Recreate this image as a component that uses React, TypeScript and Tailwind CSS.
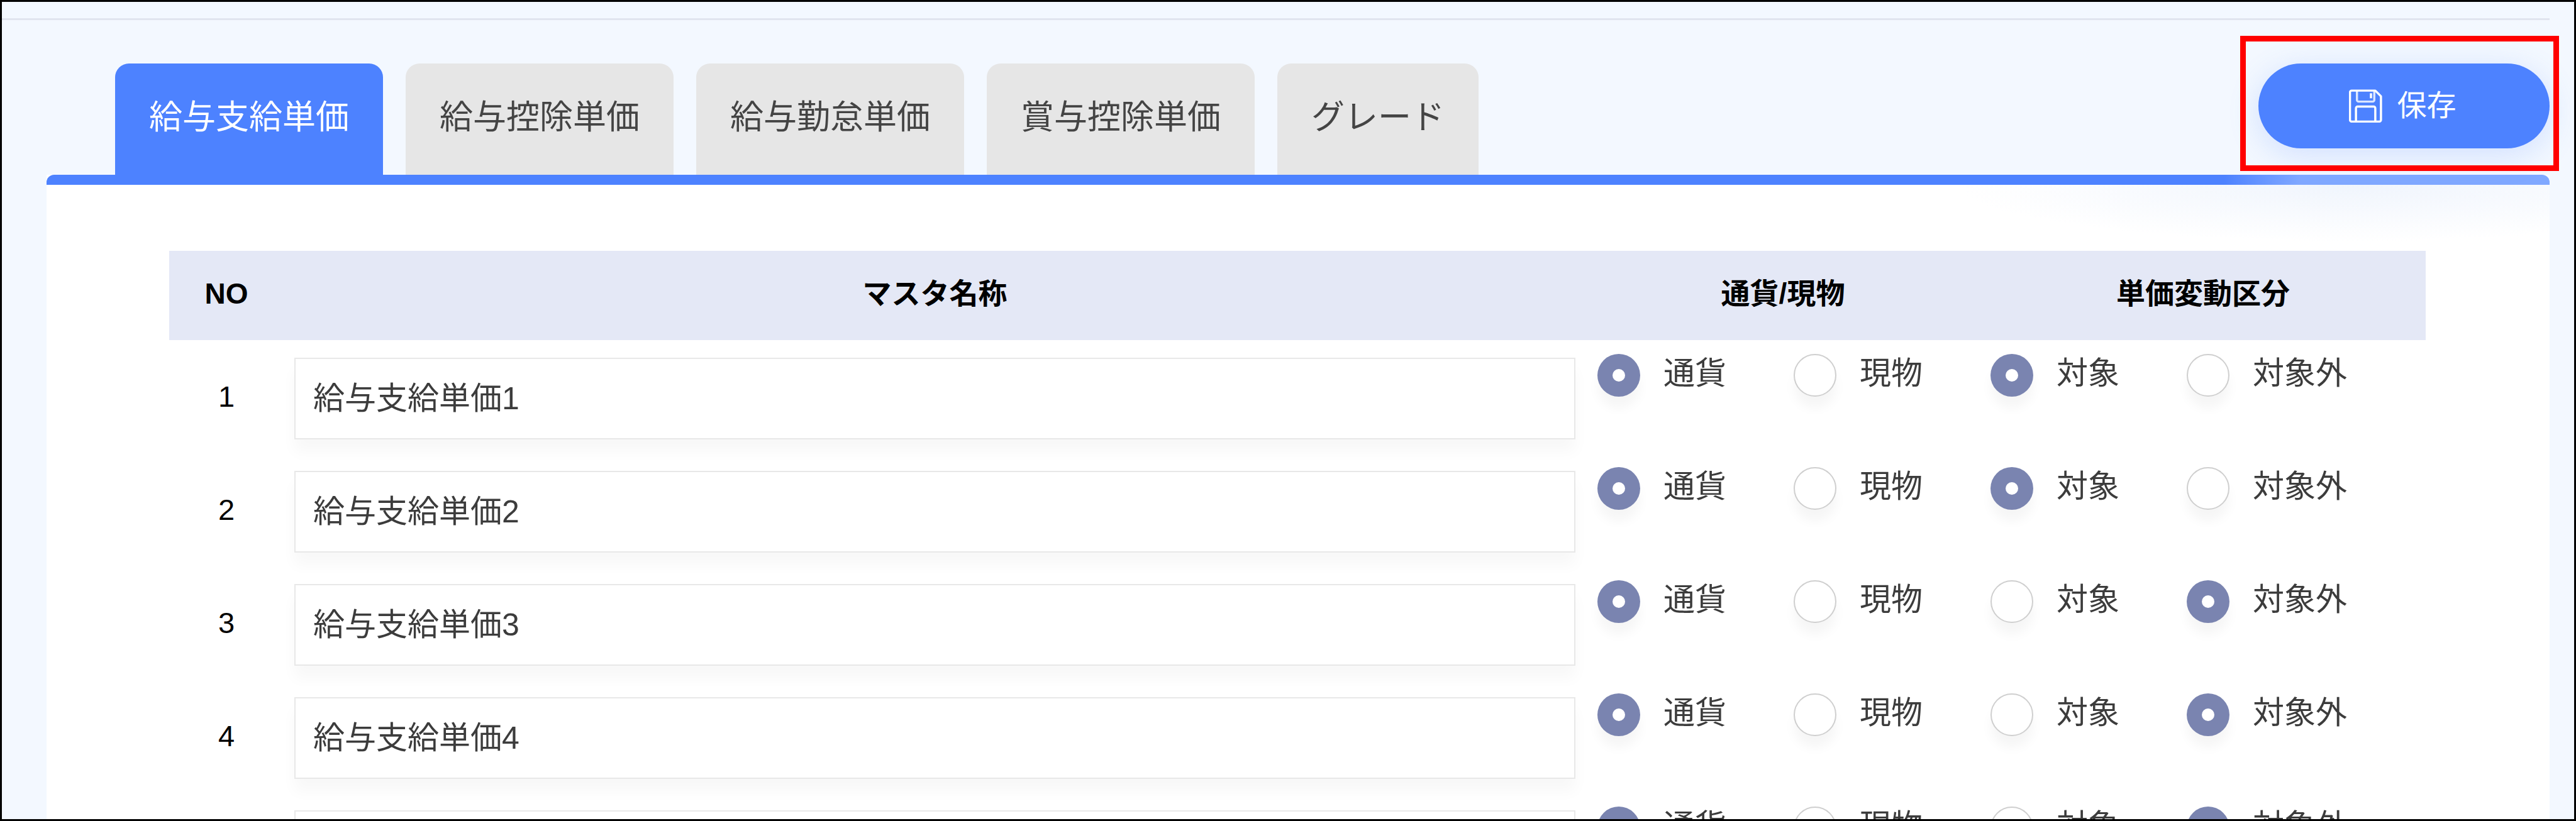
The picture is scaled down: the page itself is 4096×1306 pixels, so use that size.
import React from 'react'

const tabs = [
  { label: '給与支給単価', width: 'w-[426px]', active: true },
  { label: '給与控除単価', width: 'w-[426px]', active: false },
  { label: '給与勤怠単価', width: 'w-[426px]', active: false },
  { label: '賞与控除単価', width: 'w-[426px]', active: false },
  { label: 'グレード', width: 'w-[320px]', active: false },
]

const rows = [
  { no: 1, name: '給与支給単価1', target: true },
  { no: 2, name: '給与支給単価2', target: true },
  { no: 3, name: '給与支給単価3', target: false },
  { no: 4, name: '給与支給単価4', target: false },
  { no: 5, name: '給与支給単価5', target: false },
]

const SaveIcon = () => (
  <svg viewBox="2 2 20 20" className="h-[53px] w-[53px]" fill="none" stroke="white" strokeWidth="1.3" strokeLinejoin="round">
    <path d="M3.6 2.8h14.2l3.4 3.4v14.2a1 1 0 0 1-1 1H3.6a1 1 0 0 1-1-1V3.8a1 1 0 0 1 1-1z" />
    <path d="M6.8 3v5.4a1 1 0 0 0 1 1h8.4a1 1 0 0 0 1-1V3" opacity="0.8" />
    <path d="M15.2 4.4v3" />
    <path d="M6.2 21.2v-7.8a1 1 0 0 1 1-1h9.6a1 1 0 0 1 1 1v7.8" />
  </svg>
)

const Radio = ({ label, checked }: { label: string; checked: boolean }) => (
  <div className="flex w-[312px] items-center gap-[37px]">
    {checked ? (
      <span className="flex h-[68px] w-[68px] items-center justify-center rounded-full bg-[#7a84b0] shadow-[0_18px_18px_rgba(0,0,0,0.04)]">
        <span className="h-[20px] w-[20px] rounded-full bg-white" />
      </span>
    ) : (
      <span className="h-[68px] w-[68px] rounded-full border-2 border-[#cfcfcf] bg-white shadow-[0_18px_18px_rgba(0,0,0,0.04)]" />
    )}
    <span className="pb-[7px] text-[50px] leading-none text-[#3c3c3c]">{label}</span>
  </div>
)

export default function App() {
  return (
    <div
      className="relative box-border h-[1306px] w-full overflow-hidden border-[3px] border-black bg-[#f3f8ff]"
      style={{ fontFamily: '"Liberation Sans", "Noto Sans CJK JP", sans-serif' }}
    >
      {/* top rule */}
      <div className="mr-[39px] mt-[26px] h-[3px] bg-[#e1e5ef]" />

      {/* tabs + save */}
      <div className="mr-[39px] mt-[69px] flex h-[177px] items-start pl-[180px]">
        <div className="flex h-full gap-[36px]">
          {tabs.map((tab) => (
            <div
              key={tab.label}
              className={`flex h-full items-center justify-center rounded-t-[22px] pb-[6px] text-[53px] ${tab.width} ${
                tab.active ? 'bg-[#4d82ff] text-white' : 'bg-[#e6e6e6] text-[#444444]'
              }`}
            >
              {tab.label}
            </div>
          ))}
        </div>
        <button className="ml-auto flex h-[135px] w-[463px] items-center justify-center gap-[24px] rounded-full bg-[#4d82ff] pr-[5px] text-[47px] text-white shadow-[0_10px_50px_rgba(77,130,255,0.2)]">
          <SaveIcon />
          <span>保存</span>
        </button>
      </div>

      {/* panel */}
      <div className="ml-[71px] mr-[39px] h-[1100px] bg-[radial-gradient(ellipse_620px_90px_at_92%_16px,#f0f5fd,#ffffff)]">
        <div className="h-[16px] rounded-t-[12px] bg-[linear-gradient(90deg,#4d82ff_87%,#80a8ff_90%)]" />

        <div className="ml-[195px] mt-[105px] w-[3588px]">
          {/* header */}
          <div className="flex h-[142px] items-center bg-[#e4e8f6] pb-[5px] text-[46px] font-bold text-black">
            <div className="mr-[17px] w-[182px] text-center">NO</div>
            <div className="w-[2037px] text-center">マスタ名称</div>
            <div className="w-[660px] text-center">通貨/現物</div>
            <div className="w-[676px] text-center">単価変動区分</div>
          </div>

          {/* rows */}
          <div className="pt-[22px]">
            {rows.map((row) => (
              <div key={row.no} className="mb-[44px] flex items-start">
                <div className="mr-[17px] mt-[6px] flex h-[130px] w-[182px] items-center justify-center pb-[5px] text-[47px] text-black">
                  {row.no}
                </div>
                <input
                  readOnly
                  value={row.name}
                  className="mt-[6px] box-border h-[130px] w-[2037px] border-2 border-[#e8e8e8] bg-white pb-[10px] pl-[28px] text-[50px] text-[#3c3c3c] shadow-[0_20px_22px_rgba(0,0,0,0.03)] outline-none"
                />
                <div className="flex w-[660px] pl-[35px]">
                  <Radio label="通貨" checked />
                  <Radio label="現物" checked={false} />
                </div>
                <div className="flex">
                  <Radio label="対象" checked={row.target} />
                  <Radio label="対象外" checked={!row.target} />
                </div>
              </div>
            ))}
          </div>
        </div>
      </div>

      {/* red annotation box */}
      <div className="absolute left-[3559px] top-[54px] h-[215px] w-[507px] border-[9px] border-[#ff0000]" />
    </div>
  )
}
